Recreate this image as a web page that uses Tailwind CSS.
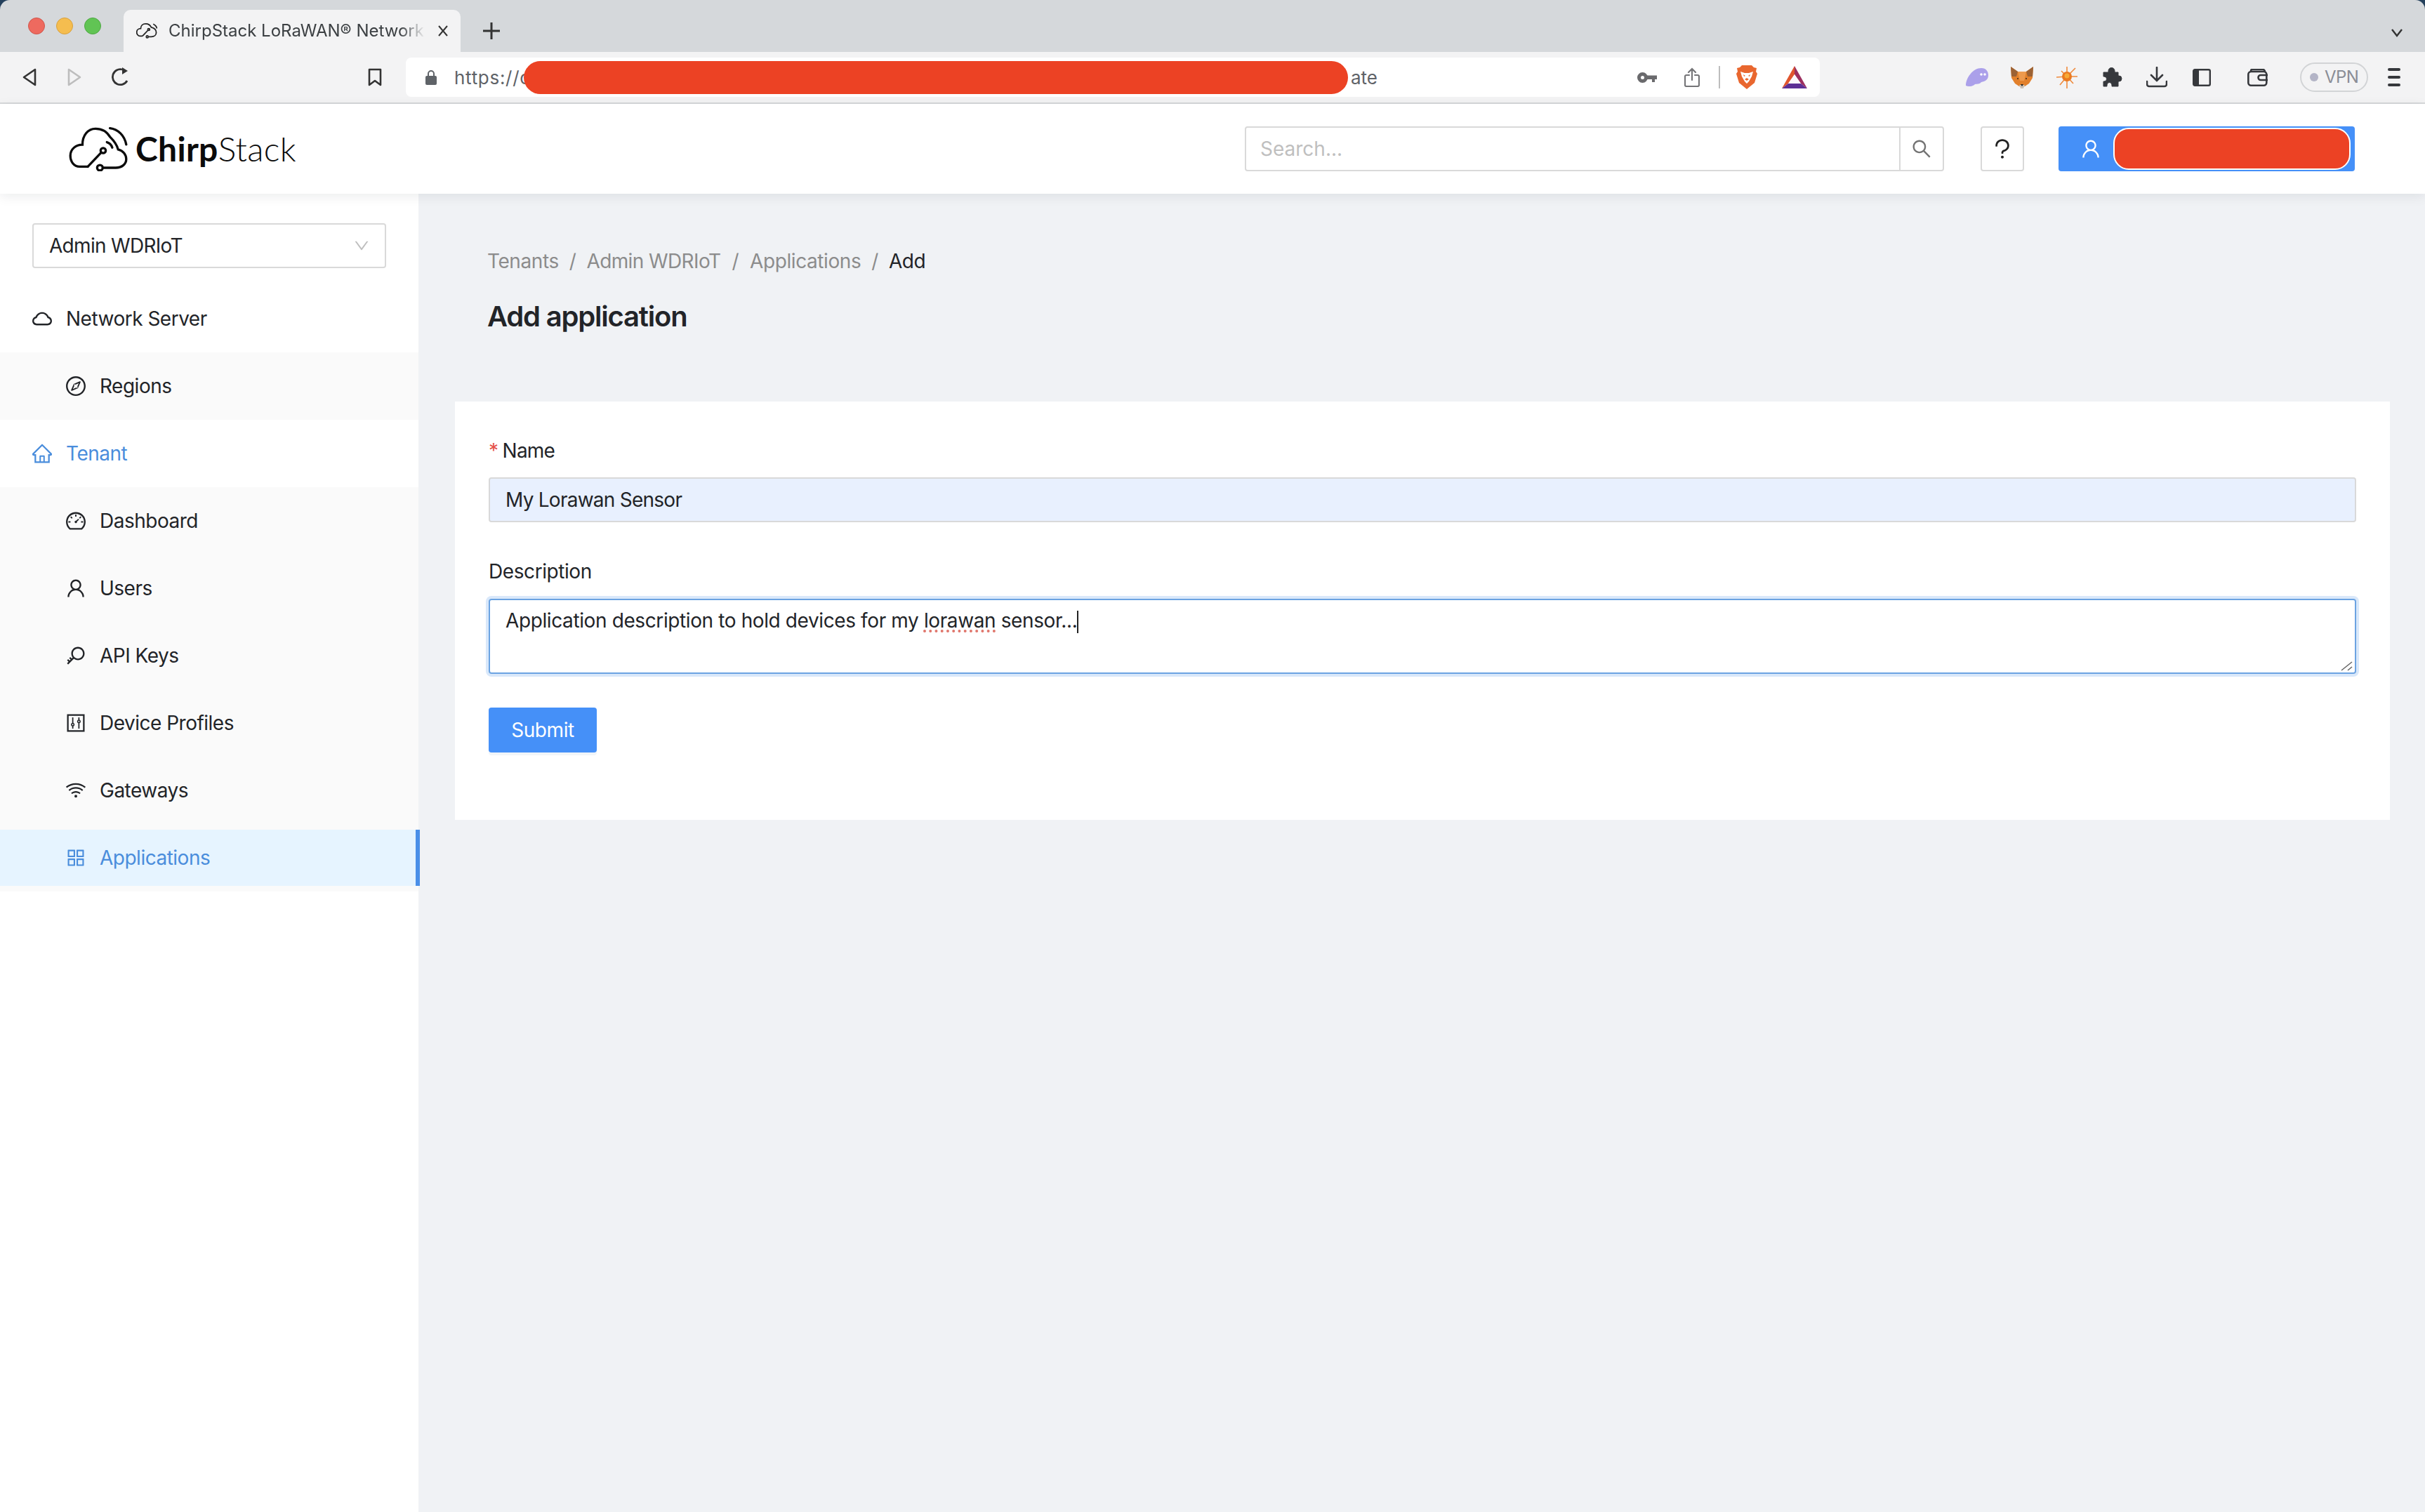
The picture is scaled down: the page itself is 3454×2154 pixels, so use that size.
<!DOCTYPE html>
<html lang="en">
<head>
  <meta charset="UTF-8">
  <title>ChirpStack LoRaWAN Network Server</title>
  <script src="https://cdn.jsdelivr.net/npm/@tailwindcss/browser@4"></script>
</head>
<body class="w-[3454px] h-[2154px] overflow-hidden bg-[#24405c] font-[Inter,sans-serif] text-[28px] text-[#222428]">
  <!-- Browser tab strip -->
  <div class="h-[74px] bg-[#d5d8db] rounded-t-[14px] flex items-end">
    <div class="flex gap-[16px] ml-[40px] mb-[25px] w-[136px]">
      <span class="w-[24px] h-[24px] rounded-full bg-[#ee6a5f] border border-[#d0554b]"></span>
      <span class="w-[24px] h-[24px] rounded-full bg-[#f5bd4f] border border-[#d8a03c]"></span>
      <span class="w-[24px] h-[24px] rounded-full bg-[#61c454] border border-[#4ea843]"></span>
    </div>
    <div class="w-[480px] h-[60px] bg-[#f3f3f4] rounded-t-[10px] flex items-center pl-[18px] text-[#3c4043]">
      <svg class="w-[30px] h-[32px]" viewBox="0 0 84 63" fill="none" stroke="#222" stroke-width="5"><path d="M25 52H15C8 52 2 45 2 37C2 28 9 22 18 22C18 10 27 3 38 3C48 3 56 9 60 17C72 20 80 28 80 38C80 48 72 55 60 55H50"/><path d="M25 52L48 28M68 4C76 8 81 14 83 22"/><circle cx="50" cy="26" r="4"/><circle cx="44" cy="55" r="4"/></svg>
      <div class="ml-[16px] w-[366px] overflow-hidden whitespace-nowrap text-[24px] leading-[32px] [mask-image:linear-gradient(to_right,black_90%,transparent)]">ChirpStack LoRaWAN® Network Server</div>
      <svg class="ml-[17px] w-[16px] h-[18px]" viewBox="0 0 16 16" stroke="#333" stroke-width="2"><path d="M2 1L14 15M14 1L2 15"/></svg>
    </div>
    <svg class="ml-[32px] mb-[18px] w-[24px] h-[24px]" viewBox="0 0 24 24" stroke="#333" stroke-width="3"><path d="M12 0V24M0 12H24"/></svg>
    <svg class="ml-auto mr-[32px] mb-[21px] w-[16px] h-[12px]" viewBox="0 0 16 12" fill="none" stroke="#333" stroke-width="2.4"><path d="M1 1L8 10L15 1"/></svg>
  </div>

  <!-- Browser toolbar -->
  <div class="h-[74px] bg-[#f3f3f4] border-b-[2px] border-[#d6d8da] flex items-center">
    <svg class="ml-[32px] w-[20px] h-[26px]" viewBox="0 0 20 26" fill="none" stroke="#333" stroke-width="2.6" stroke-linejoin="round"><path d="M18 2L2 13L18 24Z"/></svg>
    <svg class="ml-[44px] w-[20px] h-[26px]" viewBox="0 0 20 26" fill="none" stroke="#bdbdbd" stroke-width="2.6" stroke-linejoin="round"><path d="M2 2L18 13L2 24Z"/></svg>
    <svg class="ml-[42px] w-[28px] h-[28px]" viewBox="0 0 28 28" fill="none" stroke="#333" stroke-width="2.8"><path d="M23 19A11 11 0 1 1 16 3"/><path d="M16 0L24 5L16 10Z" fill="#333" stroke="none"/></svg>
    <svg class="ml-[338px] w-[20px] h-[26px]" viewBox="0 0 20 26" fill="none" stroke="#333" stroke-width="2.6" stroke-linejoin="round"><path d="M2 2H18V24L10 18L2 24Z"/></svg>
    <div class="ml-[34px] w-[2014px] h-[56px] shrink-0 bg-white rounded-[8px] flex items-center pl-[28px] text-[26px] text-[#5f6368]">
      <svg class="w-[16px] h-[22px]" viewBox="0 0 16 22" fill="#5f6368"><path d="M3 9V6a5 5 0 0 1 10 0v3h-2V6a3 3 0 0 0-6 0v3z"/><rect y="9" width="16" height="13" rx="2"/></svg>
      <span class="ml-[25px] w-[107px] whitespace-nowrap tracking-[0.7px]">https://c</span>
      <div class="w-[1174px] h-[47px] bg-[#ec4224] rounded-full -ml-[8px] shrink-0"></div>
      <span class="ml-[4px] w-[46px]">ate</span>
      <svg class="ml-[362px] w-[28px] h-[15px]" viewBox="0 0 28 15" fill="#6a6a6d"><circle cx="7.5" cy="7.5" r="5" fill="none" stroke="#6a6a6d" stroke-width="5"/><path d="M12 4.5H28V10H25V14H21V10H12Z"/></svg>
      <svg class="ml-[39px] w-[22px] h-[28px]" viewBox="0 0 22 28" fill="none" stroke="#757578" stroke-width="2.2" stroke-linecap="round"><path d="M7 11H3a2 2 0 0 0-2 2V25a2 2 0 0 0 2 2H19a2 2 0 0 0 2-2V13a2 2 0 0 0-2-2H15M11 18V2M6 7L11 2L16 7"/></svg>
      <div class="ml-[27px] w-[2px] h-[32px] bg-[#bdbdbd]"></div>
      <svg class="ml-[23px] w-[30px] h-[36px]" viewBox="0 0 30 36"><path d="M8 1H22L25 4L29 5L28 10L30 13L26 26L15 35L4 26L0 13L2 10L1 5L5 4Z" fill="#e9672f"/><path d="M6 10L12 12H18L24 10L22 17L18 24L15 27L12 24L8 17Z" fill="#fff"/><path d="M10 14L13 16L11 17ZM20 14L17 16L19 17ZM12 21L15 23L18 21L15 19Z" fill="#e9672f"/></svg>
      <svg class="ml-[35px] w-[36px] h-[32px]" viewBox="0 0 36 32"><path d="M18 0L0 32L9 25L18 12Z" fill="#e0552e"/><path d="M18 0L36 32L27 25L18 12Z" fill="#9c2f5f"/><path d="M0 32H36L27 25H9Z" fill="#5c2f95"/><path d="M18 12L27 25H9Z" fill="#fbf8fd"/></svg>
    </div>
    <svg class="ml-[208px] w-[32px] h-[26px]" viewBox="0 0 32 26"><path d="M0 25C0 14 10 0 22 0C29 0 32 5 32 10C32 17 27 19 22 20C19 24 15 22 13 23C10 26 5 27 0 25Z" fill="#aba0ea"/><circle cx="22" cy="9" r="1.8" fill="#fff"/><circle cx="27" cy="9" r="1.8" fill="#fff"/></svg>
    <svg class="ml-[32px] w-[32px] h-[31px]" viewBox="0 0 32 31"><path d="M0 0L10 7H22L32 0L31 16L26 24L20 28H12L6 24L1 16Z" fill="#e2802b"/><path d="M0 0L10 7L8 14L1 14ZM32 0L22 7L24 14L31 14Z" fill="#9b6235"/><path d="M10 7H22L19 20H13Z" fill="#ed9a4e"/><path d="M12 26H20L18 31H14Z" fill="#cdc2b6"/><path d="M14 25H18L16 28Z" fill="#222"/><circle cx="10" cy="17" r="1" fill="#3a2a1c"/><circle cx="22" cy="17" r="1" fill="#3a2a1c"/></svg>
    <svg class="ml-[33px] w-[30px] h-[31px]" viewBox="0 0 30 31" stroke="#ef8a3c" stroke-width="1.6"><path d="M15 14L0 15M15 14L30 14M15 14V0M15 14L27 2M15 14L5 26M15 14V31M15 14L24 24M15 14L7 6"/><circle cx="15" cy="14" r="7" fill="#ea7a20" stroke="none"/><circle cx="15" cy="13" r="3.5" fill="#f7a936" stroke="none"/></svg>
    <svg class="ml-[35px] w-[29px] h-[28px]" viewBox="0 0 29 28" fill="#36383c" stroke="#36383c" stroke-linejoin="round"><path d="M2 7H9V5a4.5 4.5 0 0 1 9 0V7H23V12H24a4 4 0 0 1 0 8H23V27H14V25a3.5 3.5 0 0 0-7 0V27H2V20H3a3.5 3.5 0 0 0 0-7H2Z"/></svg>
    <svg class="ml-[34px] w-[30px] h-[30px]" viewBox="0 0 30 30" fill="none" stroke="#36383c" stroke-width="2.6" stroke-linecap="round"><path d="M15 1V20M7 12L15 20L23 12M1 21V25a3 3 0 0 0 3 3H26a3 3 0 0 0 3-3V21"/></svg>
    <svg class="ml-[36px] w-[26px] h-[25px]" viewBox="0 0 26 25" fill="none" stroke="#36383c"><rect x="1.2" y="1.2" width="23.6" height="22.6" rx="2" stroke-width="2.4"/><rect x="1" y="1" width="8" height="23" fill="#36383c" stroke="none"/></svg>
    <svg class="ml-[52px] w-[30px] h-[25px]" viewBox="0 0 30 25" fill="none" stroke="#36383c" stroke-width="2.6"><rect x="1.3" y="4" width="26" height="19.7" rx="4"/><path d="M5 4V3a2 2 0 0 1 2-2H22a3 3 0 0 1 3 3M29 9H19a3.5 3.5 0 0 0 0 7H29"/></svg>
    <div class="ml-[45px] w-[97px] h-[42px] rounded-full border-[2px] border-[#d2d4d6] flex items-center pl-[12px] text-[24px] text-[#8a8d96] tracking-[-0.6px]">
      <span class="w-[12px] h-[12px] rounded-full bg-[#b3b4c6]"></span>
      <span class="ml-[9px]">VPN</span>
    </div>
    <div class="ml-[28px] flex flex-col gap-[7px]">
      <span class="w-[18px] h-[4px] rounded-full bg-[#36383c]"></span>
      <span class="w-[18px] h-[4px] rounded-full bg-[#36383c]"></span>
      <span class="w-[18px] h-[4px] rounded-full bg-[#36383c]"></span>
    </div>
  </div>

  <!-- ChirpStack header -->
  <header class="relative z-10 h-[128px] bg-white shadow-[0_4px_16px_rgba(0,21,41,0.08)] flex items-center">
    <svg class="ml-[98px] w-[84px] h-[63px]" viewBox="115 90 250 190" fill="none" stroke="#0b0b0b" stroke-width="10" stroke-linecap="round">
      <path d="M195 260H160C135 260 120 238 120 213C120 186 142 166 172 166C172 126 195 97 228 97C255 97 277 110 290 132C308 150 320 165 325 186C348 192 360 210 360 228C360 250 340 265 315 265H262"/>
      <path d="M195 260L253 199"/>
      <circle cx="261" cy="191" r="11"/>
      <circle cx="247" cy="265" r="12"/>
      <path d="M290 95C325 100 352 125 360 165"/>
      <path d="M277 155C288 158 296 166 300 178"/>
    </svg>
    <div class="ml-[11px] w-[1580px] text-[48px] leading-[64px] text-[#0b0b0b] font-['Lato',sans-serif] tracking-[0.3px]"><span class="font-bold">Chirp</span><span class="font-light">Stack</span></div>
    <div class="w-[996px] h-[64px] border-[2px] border-[#d9d9d9] rounded-[4px] flex">
      <input class="flex-1 px-[20px] text-[28px] outline-none placeholder:text-[#bfbfbf]" placeholder="Search...">
      <div class="w-[62px] border-l-[2px] border-[#d9d9d9] flex items-center justify-center">
        <svg class="w-[28px] h-[28px]" viewBox="64 64 896 896" fill="#737373"><path d="M909.6 854.5L649.9 594.8C690.2 542.7 712 479 712 412c0-80.2-31.3-155.4-87.9-212.1-56.6-56.7-132-87.9-212.1-87.9s-155.5 31.3-212.1 87.9C143.2 256.5 112 331.8 112 412c0 80.1 31.3 155.5 87.9 212.1C256.5 680.8 331.8 712 412 712c67 0 130.6-21.8 182.7-62l259.7 259.6a8.2 8.2 0 0 0 11.6 0l43.6-43.5a8.2 8.2 0 0 0 0-11.6zM570.4 570.4C528 612.7 471.8 636 412 636s-116-23.3-158.4-65.6C211.3 528 188 471.8 188 412s23.3-116.1 65.6-158.4C296 211.3 352.2 188 412 188s116.1 23.2 158.4 65.6S636 352.2 636 412s-23.3 116.1-65.6 158.4z"/></svg>
      </div>
    </div>
    <div class="ml-[52px] w-[62px] h-[64px] border-[2px] border-[#d9d9d9] rounded-[4px] flex items-center justify-center">
      <svg class="w-[32px] h-[32px]" viewBox="64 64 896 896" fill="#222"><path d="M764 280.9c-14-30.6-33.9-58.1-59.3-81.6C653.1 151.4 584.6 125 512 125s-141.1 26.4-192.7 74.2c-25.4 23.6-45.3 51-59.3 81.7-14.6 32-22 65.9-22 100.9v27c0 6.2 5 11.2 11.2 11.2h54c6.2 0 11.2-5 11.2-11.2v-27c0-99.5 88.6-180.4 197.6-180.4s197.6 80.9 197.6 180.4c0 40.8-14.5 79.2-42 111.2-27.2 31.7-65.6 54.4-108.1 64-24.3 5.5-46.2 19.2-61.7 38.8a110.85 110.85 0 0 0-23.9 68.6v31.4c0 6.2 5 11.2 11.2 11.2h54c6.2 0 11.2-5 11.2-11.2v-31.4c0-15.7 10.9-29.5 26-32.9 58.4-13.2 111.4-44.7 149.3-88.7 19.1-22.3 34-47.1 44.3-74 10.7-27.9 16.1-57.2 16.1-87 0-35-7.4-69-22-100.9zM512 787c-30.9 0-56 25.1-56 56s25.1 56 56 56 56-25.1 56-56-25.1-56-56-56z"/></svg>
    </div>
    <div class="ml-[49px] w-[422px] h-[64px] bg-[#4590f8] rounded-[4px] flex items-center pl-[32px]">
      <svg class="w-[28px] h-[28px]" viewBox="64 64 896 896" fill="#fff"><path d="M858.5 763.6a374 374 0 0 0-80.6-119.5 375.63 375.63 0 0 0-119.5-80.6c-.4-.2-.8-.3-1.2-.5C719.5 518 760 444.7 760 362c0-137-111-248-248-248S264 225 264 362c0 82.7 40.5 156 102.8 201.1-.4.2-.8.3-1.2.5-44.8 18.9-85 46-119.5 80.6a375.63 375.63 0 0 0-80.6 119.5A371.7 371.7 0 0 0 136 901.8a8 8 0 0 0 8 8.2h60c4.4 0 7.9-3.5 8-7.8 2-77.2 33-149.5 87.8-204.3 56.7-56.7 132-87.9 212.2-87.9s155.5 31.2 212.2 87.9C779 752.7 810 825 812 902.2c.1 4.4 3.6 7.8 8 7.8h60a8 8 0 0 0 8-8.2c-1-47.8-10.9-94.3-29.5-138.2zM512 534c-45.9 0-89.1-17.9-121.6-50.4S340 407.9 340 362c0-45.9 17.9-89.1 50.4-121.6S466.1 190 512 190s89.1 17.9 121.6 50.4S684 316.1 684 362c0 45.9-17.9 89.1-50.4 121.6S557.9 534 512 534z"/></svg>
      <div class="ml-[18px] w-[338px] h-[60px] bg-[#ec4224] border-[2px] border-white rounded-[22px]"></div>
    </div>
  </header>

  <div class="flex h-[1878px] bg-[#f0f2f5]">
    <!-- Sidebar -->
    <aside class="w-[596px] bg-white pt-[42px] tracking-[-0.5px]">
      <div class="ml-[46px] w-[504px] h-[64px] border-[2px] border-[#d9d9d9] rounded-[4px] flex items-center justify-between pl-[22px] pr-[22px]">
        <span class="tracking-[-0.7px]">Admin WDRIoT</span>
        <svg class="w-[22px] h-[22px]" viewBox="64 64 896 896" fill="#bfbfbf"><path d="M884 256h-75c-5.1 0-9.9 2.5-12.9 6.6L512 654.2 227.9 262.6c-3-4.1-7.8-6.6-12.9-6.6h-75c-6.5 0-10.3 7.4-6.5 12.7l352.6 486.1c12.8 17.6 39 17.6 51.7 0l352.6-486.1c3.9-5.3.1-12.7-6.4-12.7z"/></svg>
      </div>
      <nav class="mt-[32px]">
        <div class="h-[80px] mb-[8px] flex items-center gap-[20px] pl-[46px]">
          <svg class="w-[28px] h-[28px]" viewBox="64 64 896 896" fill="currentColor"><path d="M811.4 418.7C765.6 297.9 648.9 212 512.2 212S258.8 297.8 213 418.6C127.3 441.1 64 519.1 64 612c0 110.5 89.5 200 199.9 200h496.2C870.5 812 960 722.5 960 612c0-92.7-63.1-170.7-148.6-193.3zm36.3 281a123.07 123.07 0 0 1-87.6 36.3H263.9c-33.1 0-64.2-12.9-87.6-36.3A123.3 123.3 0 0 1 140 612c0-28 9.1-54.3 26.2-76.3a125.7 125.7 0 0 1 66.1-43.7l37.9-9.9 13.9-36.6c8.6-22.8 20.6-44.1 35.7-63.4a245.6 245.6 0 0 1 52.4-49.9c41.1-28.9 89.5-44.2 140-44.2s98.9 15.3 140 44.2c19.9 14 37.5 30.8 52.4 49.9 15.1 19.3 27.1 40.7 35.7 63.4l13.8 36.5 37.8 10c54.3 14.5 92.1 63.8 92.1 120 0 33.1-12.9 64.3-36.3 87.7z"/></svg>
          <span>Network Server</span>
        </div>
        <div class="bg-[#fafafa] py-[8px]">
          <div class="h-[80px] flex items-center gap-[20px] pl-[94px]">
            <svg class="w-[28px] h-[28px]" viewBox="64 64 896 896" fill="currentColor"><path d="M512 64C264.6 64 64 264.6 64 512s200.6 448 448 448 448-200.6 448-448S759.4 64 512 64zm0 820c-205.4 0-372-166.6-372-372s166.6-372 372-372 372 166.6 372 372-166.6 372-372 372zm198.4-588.1a32 32 0 0 0-24.5.5L414.9 415 296.4 686c-3.6 8.2-3.6 17.5 0 25.7 3.4 7.8 9.7 13.9 17.7 17 3.8 1.5 7.7 2.2 11.7 2.2 4.4 0 8.7-.9 12.8-2.7l271-118.6 118.5-271a32.06 32.06 0 0 0-17.7-42.7zM576.8 534.4l26.2 26.2-42.4 42.4-26.2-26.2L380 644.4 447.5 490 422 464.4l42.4-42.4 25.5 25.5L644.4 380l-67.6 154.4z"/></svg>
            <span>Regions</span>
          </div>
        </div>
        <div class="h-[80px] my-[8px] flex items-center gap-[20px] pl-[46px] text-[#4a8ddc]">
          <svg class="w-[28px] h-[28px]" viewBox="64 64 896 896" fill="currentColor"><path d="M946.5 505L560.1 118.8l-25.9-25.9a31.5 31.5 0 0 0-44.4 0L77.5 505a63.9 63.9 0 0 0-18.8 46c.4 35.2 29.7 63.3 64.9 63.3h42.5V940h691.8V614.3h43.4c17.1 0 33.2-6.7 45.3-18.8a63.6 63.6 0 0 0 18.7-45.3c0-17-6.7-33.1-18.8-45.2zM568 868H456V664h112v204zm217.9-325.7V868H632V640c0-22.1-17.9-40-40-40H432c-22.1 0-40 17.9-40 40v228H238.1V542.3h-96l370-369.7 23.1 23.1L882 542.3h-96.1z"/></svg>
          <span>Tenant</span>
        </div>
        <div class="bg-[#fafafa] py-[8px] flex flex-col gap-[16px]">
          <div class="h-[80px] flex items-center gap-[20px] pl-[94px]">
            <svg class="w-[28px] h-[28px]" viewBox="64 64 896 896" fill="currentColor"><path d="M924.8 385.6a446.7 446.7 0 0 0-96-142.4 446.7 446.7 0 0 0-142.4-96C631.1 123.8 572.5 112 512 112s-119.1 11.8-174.4 35.2a446.7 446.7 0 0 0-142.4 96 446.7 446.7 0 0 0-96 142.4C75.8 440.9 64 499.5 64 560c0 132.7 58.3 257.7 159.9 343.1l1.7 1.4c5.8 4.8 13.1 7.5 20.6 7.5h531.7c7.5 0 14.8-2.7 20.6-7.5l1.7-1.4C901.7 817.7 960 692.7 960 560c0-60.5-11.9-119.1-35.2-174.4zM761.4 836H262.6A371.12 371.12 0 0 1 140 560c0-99.4 38.7-192.8 109-263 70.3-70.3 163.7-109 263-109 99.4 0 192.8 38.7 263 109 70.3 70.3 109 163.7 109 263 0 105.6-44.5 205.5-122.6 276zM623.5 421.5a8.03 8.03 0 0 0-11.3 0L527.7 506c-18.7-5-39.4-.2-54.1 14.5a55.95 55.95 0 0 0 0 79.2 55.95 55.95 0 0 0 79.2 0 55.87 55.87 0 0 0 14.5-54.1l84.5-84.5c3.1-3.1 3.1-8.2 0-11.3l-28.3-28.3zM490 320h44c4.4 0 8-3.6 8-8v-80c0-4.4-3.6-8-8-8h-44c-4.4 0-8 3.6-8 8v80c0 4.4 3.6 8 8 8zm260 218v44c0 4.4 3.6 8 8 8h80c4.4 0 8-3.6 8-8v-44c0-4.4-3.6-8-8-8h-80c-4.4 0-8 3.6-8 8zm12.7-197.2l-31.1-31.1a8.03 8.03 0 0 0-11.3 0l-56.6 56.6a8.03 8.03 0 0 0 0 11.3l31.1 31.1c3.1 3.1 8.2 3.1 11.3 0l56.6-56.6c3.1-3.1 3.1-8.2 0-11.3zm-458.6-31.1a8.03 8.03 0 0 0-11.3 0l-31.1 31.1a8.03 8.03 0 0 0 0 11.3l56.6 56.6c3.1 3.1 8.2 3.1 11.3 0l31.1-31.1c3.1-3.1 3.1-8.2 0-11.3l-56.6-56.6zM262 530h-80c-4.4 0-8 3.6-8 8v44c0 4.4 3.6 8 8 8h80c4.4 0 8-3.6 8-8v-44c0-4.4-3.6-8-8-8z"/></svg>
            <span>Dashboard</span>
          </div>
          <div class="h-[80px] flex items-center gap-[20px] pl-[94px]">
            <svg class="w-[28px] h-[28px]" viewBox="64 64 896 896" fill="currentColor"><path d="M858.5 763.6a374 374 0 0 0-80.6-119.5 375.63 375.63 0 0 0-119.5-80.6c-.4-.2-.8-.3-1.2-.5C719.5 518 760 444.7 760 362c0-137-111-248-248-248S264 225 264 362c0 82.7 40.5 156 102.8 201.1-.4.2-.8.3-1.2.5-44.8 18.9-85 46-119.5 80.6a375.63 375.63 0 0 0-80.6 119.5A371.7 371.7 0 0 0 136 901.8a8 8 0 0 0 8 8.2h60c4.4 0 7.9-3.5 8-7.8 2-77.2 33-149.5 87.8-204.3 56.7-56.7 132-87.9 212.2-87.9s155.5 31.2 212.2 87.9C779 752.7 810 825 812 902.2c.1 4.4 3.6 7.8 8 7.8h60a8 8 0 0 0 8-8.2c-1-47.8-10.9-94.3-29.5-138.2zM512 534c-45.9 0-89.1-17.9-121.6-50.4S340 407.9 340 362c0-45.9 17.9-89.1 50.4-121.6S466.1 190 512 190s89.1 17.9 121.6 50.4S684 316.1 684 362c0 45.9-17.9 89.1-50.4 121.6S557.9 534 512 534z"/></svg>
            <span>Users</span>
          </div>
          <div class="h-[80px] flex items-center gap-[20px] pl-[94px]">
            <svg class="w-[28px] h-[28px]" viewBox="64 64 896 896" fill="currentColor"><path d="M608 112c-167.9 0-304 136.1-304 304 0 70.3 23.9 135 63.9 186.5l-41.1 41.1-62.3-62.3a8.15 8.15 0 0 0-11.4 0l-39.8 39.8a8.15 8.15 0 0 0 0 11.4l62.3 62.3-44.9 44.9-62.3-62.3a8.15 8.15 0 0 0-11.4 0l-39.8 39.8a8.15 8.15 0 0 0 0 11.4l62.3 62.3-65.3 65.3a8.03 8.03 0 0 0 0 11.3l42.3 42.3c3.1 3.1 8.2 3.1 11.3 0l253.6-253.6A304.06 304.06 0 0 0 608 720c167.9 0 304-136.1 304-304S775.9 112 608 112zm161.2 465.2C726.2 620.3 668.9 644 608 644c-60.9 0-118.2-23.7-161.2-66.8-43.1-43-66.8-100.3-66.8-161.2 0-60.9 23.7-118.2 66.8-161.2 43-43.1 100.3-66.8 161.2-66.8 60.9 0 118.2 23.7 161.2 66.8 43.1 43 66.8 100.3 66.8 161.2 0 60.9-23.7 118.2-66.8 161.2z"/></svg>
            <span>API Keys</span>
          </div>
          <div class="h-[80px] flex items-center gap-[20px] pl-[94px]">
            <svg class="w-[28px] h-[28px]" viewBox="64 64 896 896" fill="none" stroke="currentColor"><rect x="148" y="148" width="728" height="728" stroke-width="72"/><path d="M372 256V768M652 256V768" stroke-width="56"/><circle cx="372" cy="584" r="56" fill="#fafafa" stroke-width="50"/><circle cx="652" cy="440" r="56" fill="#fafafa" stroke-width="50"/></svg>
            <span>Device Profiles</span>
          </div>
          <div class="h-[80px] flex items-center gap-[20px] pl-[94px]">
            <svg class="w-[28px] h-[28px]" viewBox="64 64 896 896" fill="currentColor"><path d="M723 620.5C666.8 571.6 593.4 542 513 542s-153.8 29.6-210.1 78.6a8.1 8.1 0 0 0-.8 11.2l36 42.9c2.9 3.4 8 3.8 11.4.9C393.1 637.2 450.3 614 513 614s119.9 23.2 163.5 61.5c3.4 2.9 8.5 2.5 11.4-.9l36-42.9c2.8-3.3 2.4-8.3-.9-11.2zm117.4-140.1C751.7 406.5 637.6 362 513 362s-238.7 44.5-327.5 118.4a8.05 8.05 0 0 0-1 11.3l36 42.9c2.8 3.4 7.9 3.8 11.2 1C308 472.2 406.1 434 513 434s205 38.2 281.2 101.6c3.4 2.8 8.4 2.4 11.2-1l36-42.9c2.8-3.4 2.4-8.5-1-11.3zm116.7-139C835.7 241.8 680.3 182 511 182c-168.2 0-322.6 59-443.7 157.4a8 8 0 0 0-1.1 11.4l36 42.9c2.8 3.3 7.8 3.8 11.1 1.1C222 306.7 360.3 254 511 254c151.8 0 291 53.5 400 142.7 3.4 2.8 8.4 2.3 11.2-1.1l36-42.9c2.9-3.4 2.4-8.5-1.1-11.3zM448 778a64 64 0 1 0 128 0 64 64 0 1 0-128 0z"/></svg>
            <span>Gateways</span>
          </div>
          <div class="h-[80px] w-[598px] flex items-center gap-[20px] pl-[94px] bg-[#e6f4ff] text-[#4a8ddc] border-r-[6px] border-[#4a8fe8]">
            <svg class="w-[28px] h-[28px]" viewBox="64 64 896 896" fill="currentColor"><path d="M464 144H160c-8.8 0-16 7.2-16 16v304c0 8.8 7.2 16 16 16h304c8.8 0 16-7.2 16-16V160c0-8.8-7.2-16-16-16zm-52 268H212V212h200v200zm452-268H560c-8.8 0-16 7.2-16 16v304c0 8.8 7.2 16 16 16h304c8.8 0 16-7.2 16-16V160c0-8.8-7.2-16-16-16zm-52 268H612V212h200v200zM464 544H160c-8.8 0-16 7.2-16 16v304c0 8.8 7.2 16 16 16h304c8.8 0 16-7.2 16-16V560c0-8.8-7.2-16-16-16zm-52 268H212V612h200v200zm452-268H560c-8.8 0-16 7.2-16 16v304c0 8.8 7.2 16 16 16h304c8.8 0 16-7.2 16-16V560c0-8.8-7.2-16-16-16zm-52 268H612V612h200v200z"/></svg>
            <span>Applications</span>
          </div>
        </div>
      </nav>
    </aside>

    <!-- Main content -->
    <main class="flex-1 pl-[52px] pr-[50px] pt-[74px] tracking-[-0.42px]">
      <div class="pl-[46px] flex items-center text-[#8c8c8c] leading-[44px]">
        <span>Tenants</span><span class="mx-[15px]">/</span>
        <span class="tracking-[-0.6px]">Admin WDRIoT</span><span class="mx-[16px]">/</span>
        <span>Applications</span><span class="mx-[15px]">/</span>
        <span class="text-[#222428]">Add</span>
      </div>
      <h1 class="pl-[46px] mt-[29px] text-[40px] leading-[56px] font-semibold tracking-[-1.2px]">Add application</h1>
      <section class="mt-[93px] h-[596px] bg-white pl-[48px] pr-[48px] pt-[48px]">
        <label class="block h-[44px] leading-[44px]"><span class="text-[#e5534b] mr-[6px]">*</span><span class="tracking-[-0.8px]">Name</span></label>
        <input class="mt-[16px] block w-full h-[64px] px-[22px] bg-[#e8f0fe] border-[2px] border-[#d9d9d9] rounded-[4px] text-[28px] tracking-[-0.75px] outline-none" value="My Lorawan Sensor">
        <label class="block mt-[48px] h-[44px] leading-[44px]">Description</label>
        <div class="relative mt-[17px] w-full h-[107px] px-[22px] pt-[7px] border-[2px] border-[#6ba3e2] rounded-[4px] shadow-[0_0_0_4px_#d9e8fa] leading-[44px] tracking-[-0.39px]">
          Application description to hold devices for my <span class="underline decoration-dotted decoration-[#e0766c] decoration-[4px] underline-offset-[3px]">lorawan</span> sensor...<span class="inline-block w-[2px] h-[32px] bg-[#222] align-middle"></span>
          <svg class="absolute right-[2px] bottom-[2px] w-[18px] h-[14px]" viewBox="0 0 18 14" stroke="#666" stroke-width="1.6"><path d="M1 13L16 1M10 13L16 8"/></svg>
        </div>
        <button class="mt-[48px] block w-[154px] h-[64px] bg-[#4590f8] rounded-[4px] text-white shadow-[0_4px_0_#f1f5f9]">Submit</button>
      </section>
    </main>
  </div>
</body>
</html>
